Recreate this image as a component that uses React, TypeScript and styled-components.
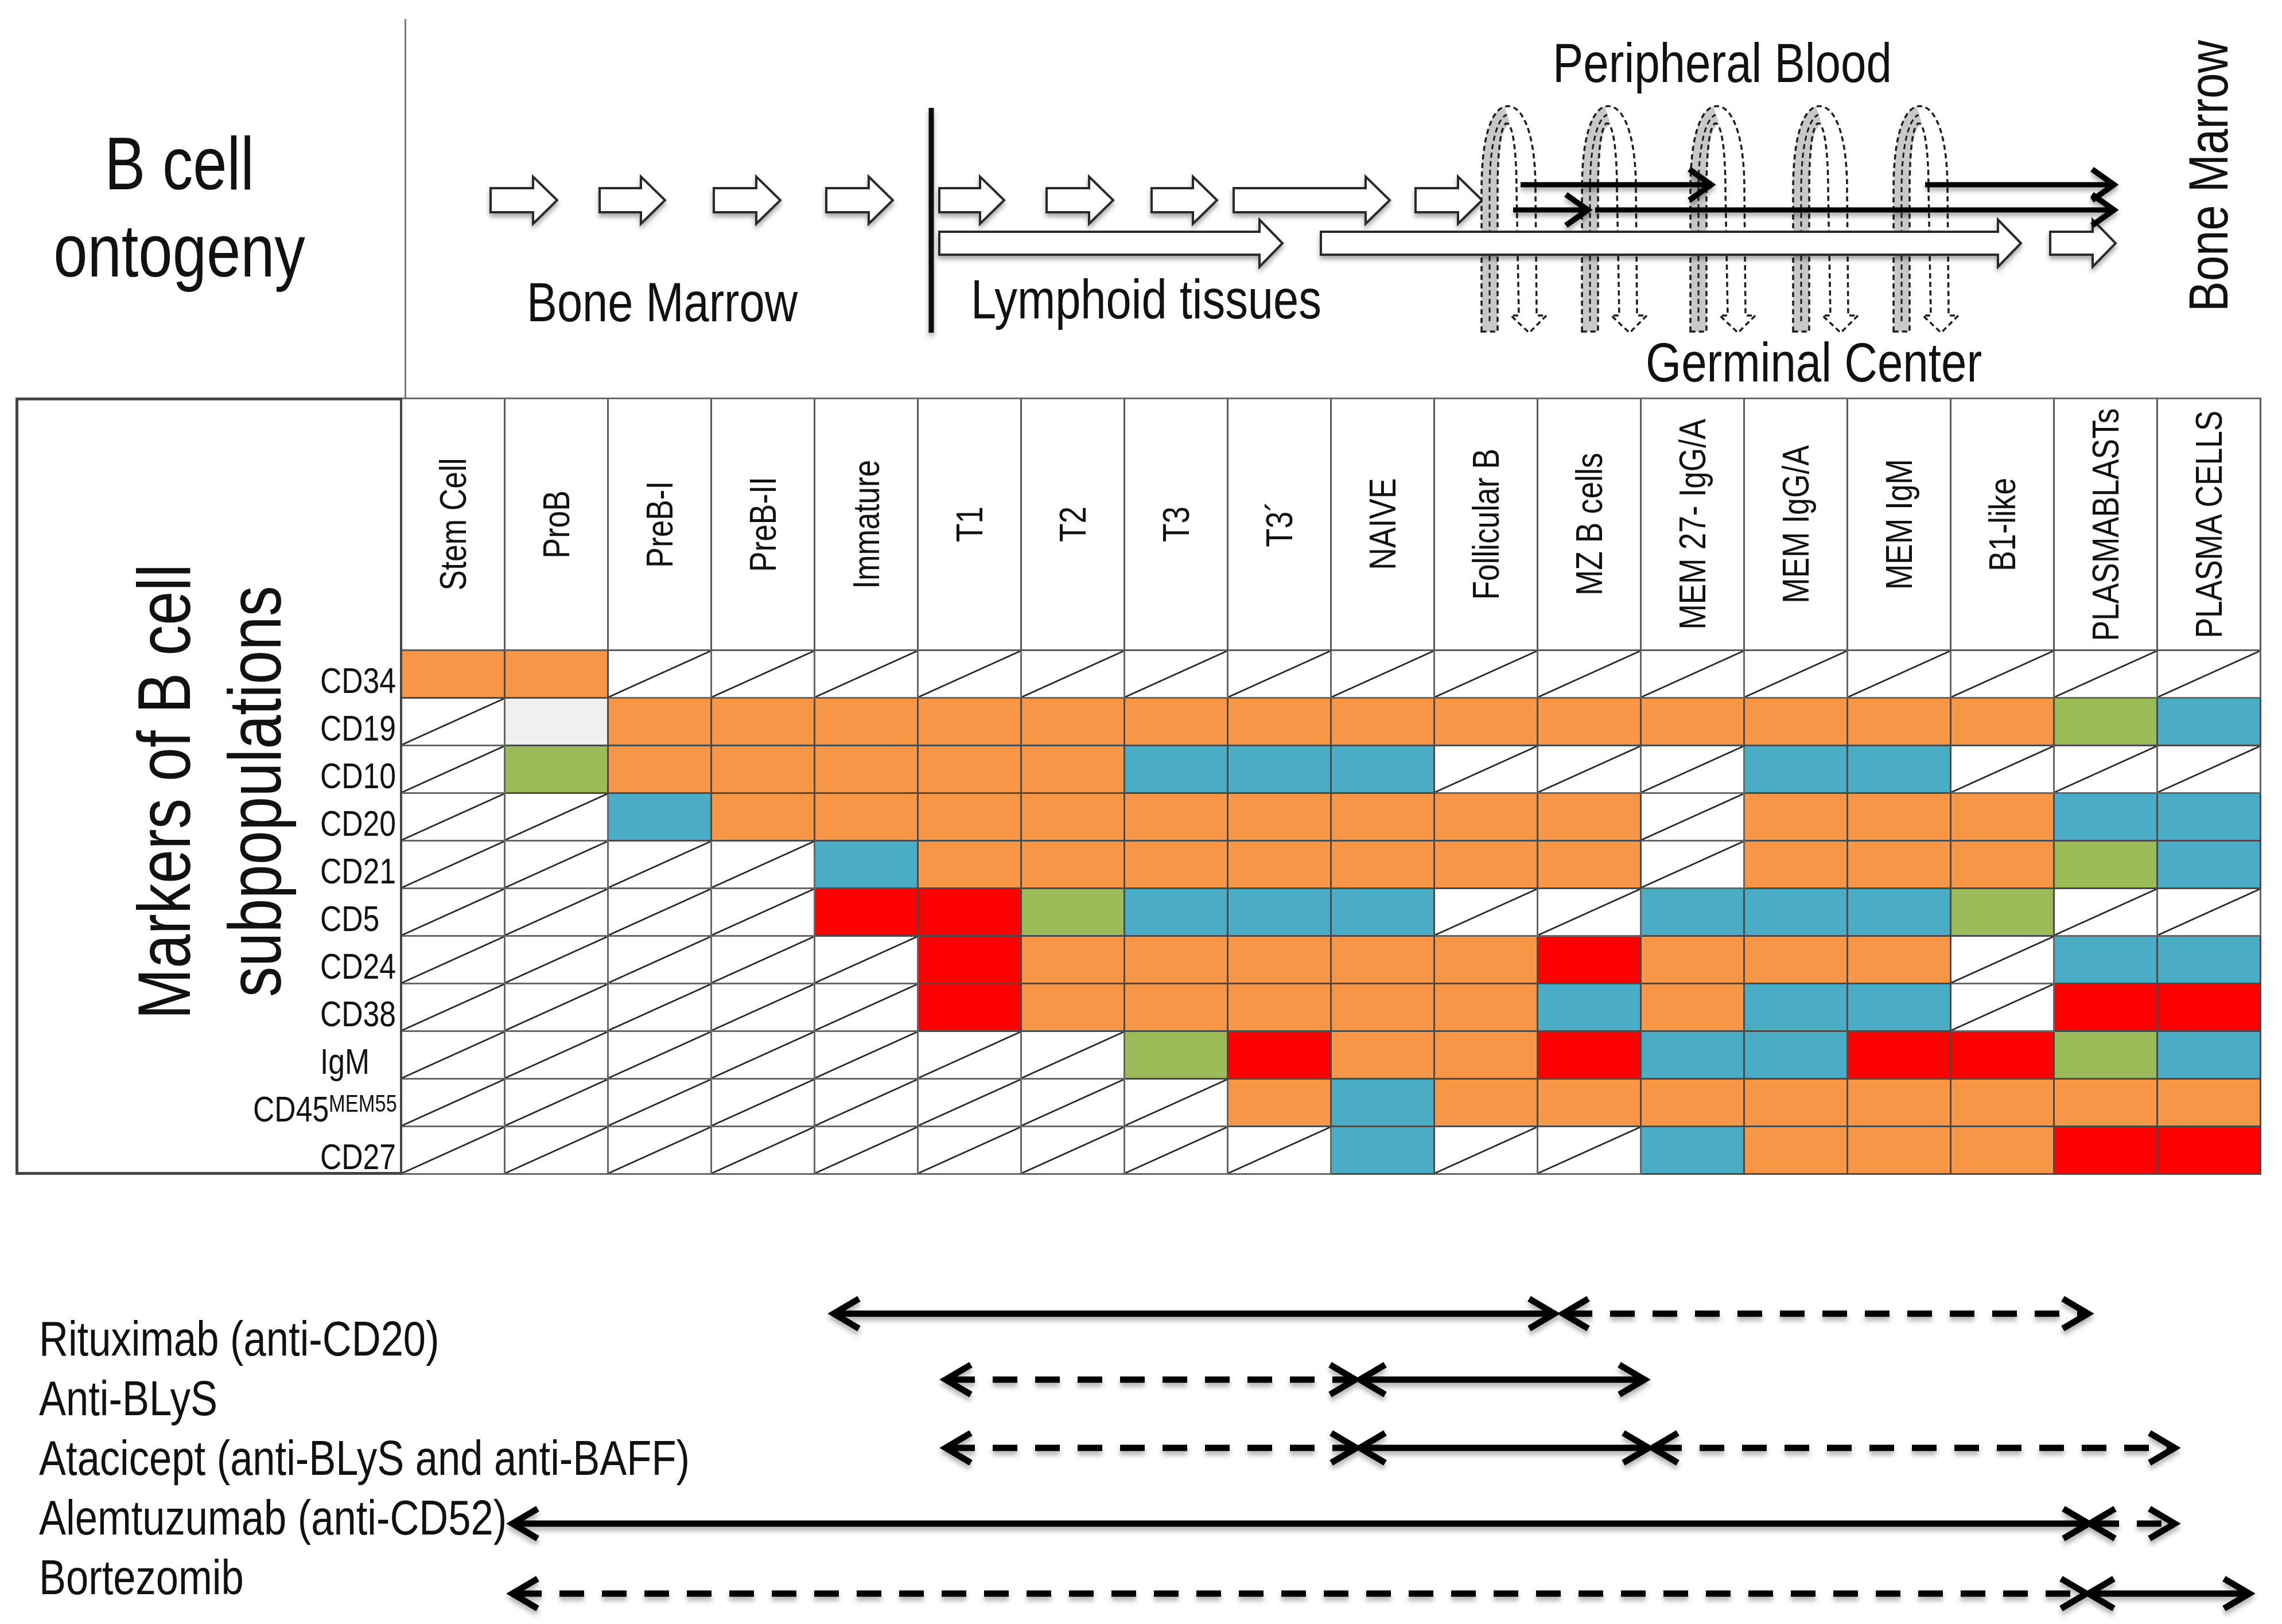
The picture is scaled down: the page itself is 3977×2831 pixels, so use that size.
import React from 'react'
import styled, { createGlobalStyle } from 'styled-components'

const GlobalStyle = createGlobalStyle`
  html, body {
    margin: 0;
    padding: 0;
    background: #fff;
  }
  body {
    font-family: 'Liberation Sans', Arial, Helvetica, sans-serif;
    color: #111;
  }
`

const Page = styled.div`
  width: 3977px;
  height: 2831px;
  display: flex;
  flex-direction: column;
  background: #fff;
  overflow: hidden;
`

/* ---------- top: ontogeny diagram ---------- */

const TopSection = styled.section`
  display: flex;
  height: 693px;
  flex-shrink: 0;
`

const OntogenyTitle = styled.div`
  width: 705px;
  flex-shrink: 0;
  box-sizing: border-box;
  padding: 209px 80px 0 0;
  text-align: center;
  font-size: 130px;
  line-height: 152px;

  span {
    display: block;
    transform: scaleX(0.82);
  }
`

const DiagramPane = styled.div`
  position: relative;
  flex: 1;
  margin-top: 33px;
  border-left: 3px solid #7a7a7a;

  svg {
    display: block;
  }
`

const DiagramLabel = styled.text`
  font-family: 'Liberation Sans', Arial, sans-serif;
  font-size: 97px;
  fill: #111;
`

/* the right-hand "Bone Marrow" reads bottom to top, pinned to the canvas edge */
const SideLabel = styled.div`
  position: absolute;
  right: 80px;
  top: -26px;
  height: 600px;
  writing-mode: vertical-rl;
  transform: rotate(180deg) scaleY(0.82);
  font-size: 97px;
  line-height: 97px;
  text-align: center;
  white-space: nowrap;
`

/* ---------- middle: markers table ---------- */

const MarkerTable = styled.div`
  display: grid;
  grid-template-columns: 674px repeat(18, 180px);
  grid-template-rows: 442px repeat(11, 83px);
  margin-left: 27px;
  flex-shrink: 0;
`

const TitleCell = styled.div`
  grid-column: 1;
  grid-row: 1 / -1;
  box-sizing: border-box;
  border: 5px solid #454545;
  border-right-width: 4px;
  display: flex;
  align-items: center;
  justify-content: center;
  padding-top: 20px;
`

const VerticalTitle = styled.div`
  writing-mode: vertical-rl;
  transform: rotate(180deg) scaleY(0.82);
  font-size: 130px;
  line-height: 158px;
  text-align: center;
  white-space: nowrap;
`

const RowLabel = styled.div<{ $row: number; $right?: boolean }>`
  grid-column: 1;
  grid-row: ${p => p.$row};
  position: relative;
  z-index: 1;
  display: flex;
  align-items: flex-end;
  justify-content: ${p => (p.$right ? 'flex-end' : 'flex-start')};
  padding: ${p => (p.$right ? '0 9px 0 0' : '0 0 0 531px')};
  font-size: 63px;
  line-height: 63px;
  white-space: nowrap;

  span {
    display: inline-block;
    transform: scaleX(0.82);
    transform-origin: ${p => (p.$right ? 'right' : 'left')};
  }
`

const Sup = styled.sup`
  font-size: 42px;
  line-height: 0;
  vertical-align: 17px;
`

const HeaderCell = styled.div`
  box-sizing: border-box;
  border-top: 3px solid #6a6a6a;
  border-right: 3px solid #5a5a5a;
  border-bottom: 3px solid #5a5a5a;
  display: flex;
  align-items: center;
  justify-content: center;
`

const HeaderText = styled.span`
  writing-mode: vertical-rl;
  transform: rotate(180deg) scaleY(0.82);
  font-size: 65px;
  line-height: 1;
  white-space: nowrap;
`

const FILL: Record<string, string> = {
  o: '#f79646',
  b: '#4bacc6',
  g: '#9bbb59',
  r: '#ff0000',
  w: '#f0f0f0',
}

const HATCH =
  'linear-gradient(to bottom right, transparent calc(50% - 1.8px), #2a2a2a calc(50% - 1px), #2a2a2a calc(50% + 1px), transparent calc(50% + 1.8px)), #fff'

const Cell = styled.div<{ $fill: string }>`
  box-sizing: border-box;
  border-right: 3px solid ${p => (p.$fill === 'x' ? '#666' : '#4a4a4a')};
  border-bottom: 3px solid ${p => (p.$fill === 'x' ? '#666' : '#4a4a4a')};
  background: ${p => (p.$fill === 'x' ? HATCH : FILL[p.$fill])};
`

/* ---------- bottom: therapies ---------- */

const TherapySection = styled.section`
  position: relative;
  flex: 1;
  padding: 233px 0 0 68px;
`

const TherapyLabel = styled.div`
  font-size: 86px;
  line-height: 104px;
  white-space: nowrap;
  transform: scaleX(0.82);
  transform-origin: left;
`

const ArrowLayer = styled.svg`
  position: absolute;
  inset: 0;
  pointer-events: none;
`

/* ---------- data ---------- */

const stages = [
  'Stem Cell', 'ProB', 'PreB-I', 'PreB-II', 'Immature', 'T1', 'T2', 'T3', 'T3´', 'NAIVE',
  'Follicular B', 'MZ B cells', 'MEM 27- IgG/A', 'MEM IgG/A', 'MEM IgM', 'B1-like',
  'PLASMABLASTs', 'PLASMA CELLS',
]

const markers: { name: string; sup?: string; cells: string }[] = [
  { name: 'CD34', cells: 'ooxxxxxxxxxxxxxxxx' },
  { name: 'CD19', cells: 'xwoooooooooooooogb' },
  { name: 'CD10', cells: 'xgooooobbbxxxbbxxx' },
  { name: 'CD20', cells: 'xxboooooooooxooobb' },
  { name: 'CD21', cells: 'xxxxboooooooxooogb' },
  { name: 'CD5', cells: 'xxxxrrgbbbxxbbbgxx' },
  { name: 'CD24', cells: 'xxxxxroooooroooxbb' },
  { name: 'CD38', cells: 'xxxxxrooooobobbxrr' },
  { name: 'IgM', cells: 'xxxxxxxgroorbbrrgb' },
  { name: 'CD45', sup: 'MEM55', cells: 'xxxxxxxxoboooooooo' },
  { name: 'CD27', cells: 'xxxxxxxxxbxxbooorr' },
]

const therapies = [
  'Rituximab (anti-CD20)',
  'Anti-BLyS',
  'Atacicept (anti-BLyS and anti-BAFF)',
  'Alemtuzumab (anti-CD52)',
  'Bortezomib',
]

type Seg = { x1: number; x2: number; dashed?: boolean }

const therapyArrows: { y: number; segs: Seg[] }[] = [
  { y: 2290, segs: [{ x1: 1453, x2: 2709 }, { x1: 2724, x2: 3639, dashed: true }] },
  { y: 2405, segs: [{ x1: 1648, x2: 2362, dashed: true }, { x1: 2370, x2: 2866 }] },
  {
    y: 2524,
    segs: [
      { x1: 1648, x2: 2364, dashed: true },
      { x1: 2370, x2: 2873 },
      { x1: 2880, x2: 3790, dashed: true },
    ],
  },
  { y: 2656, segs: [{ x1: 893, x2: 3640 }, { x1: 3642, x2: 3790, dashed: true }] },
  { y: 2778, segs: [{ x1: 893, x2: 3636, dashed: true }, { x1: 3640, x2: 3920 }] },
]

const row1Arrows = [
  [855, 971], [1045, 1159], [1244, 1360], [1440, 1556], [1637, 1750],
  [1824, 1940], [2007, 2121], [2150, 2422], [2467, 2583],
]
const row2Arrows = [[1637, 2235], [3573, 3687]]
const loopCenters = [2628, 2803, 2992, 3171, 3346]
const blackLines = [
  { x1: 2650, x2: 2982, y: 322 },
  { x1: 3355, x2: 3684, y: 322 },
  { x1: 2637, x2: 2767, y: 366 },
  { x1: 2780, x2: 3684, y: 366 },
]

/* ---------- drawing helpers ---------- */

const blockArrow = (x1: number, x2: number, cy: number, shaft = 21, head = 41, len = 42) =>
  `M${x1},${cy - shaft} L${x2 - len},${cy - shaft} L${x2 - len},${cy - head} L${x2},${cy} ` +
  `L${x2 - len},${cy + head} L${x2 - len},${cy + shaft} L${x1},${cy + shaft} Z`

const loopOutline = (c: number) =>
  `M${c - 46},578 L${c - 46},330 C${c - 46},232 ${c - 26},185 ${c},185 ` +
  `C${c + 26},185 ${c + 48},232 ${c + 48},330 L${c + 50},550 L${c + 67},550 L${c + 37},580 ` +
  `L${c + 5},550 L${c + 19},550 L${c + 15},330 C${c + 15},262 ${c + 8},215 ${c - 2},215 ` +
  `C${c - 12},215 ${c - 18},262 ${c - 18},330 L${c - 18},578 Z`

const loopBand = (c: number) =>
  `M${c - 46},578 L${c - 46},330 C${c - 46},240 ${c - 30},192 ${c - 6},186 ` +
  `L${c + 4},216 C${c - 10},220 ${c - 18},262 ${c - 18},330 L${c - 18},578 Z`

const Chevron: React.FC<{ x: number; y: number; dir: 1 | -1; len?: number; half?: number; w?: number }> = ({
  x, y, dir, len = 44, half = 26, w = 11,
}) => (
  <polyline
    points={`${x - dir * len},${y - half} ${x},${y} ${x - dir * len},${y + half}`}
    fill="none"
    stroke="#000"
    strokeWidth={w}
    strokeLinejoin="miter"
  />
)

const OntogenyDiagram = () => (
  <DiagramPane>
    <svg width={3269} height={660} viewBox="708 33 3269 660">
      <defs>
        <filter id="topShadow" filterUnits="userSpaceOnUse" x="0" y="0" width="4200" height="800">
          <feDropShadow dx="0" dy="6" stdDeviation="4" floodColor="#000" floodOpacity="0.35" />
        </filter>
      </defs>

      <g filter="url(#topShadow)">
        <line x1={1623} y1={188} x2={1623} y2={580} stroke="#111" strokeWidth={9} />
        {row1Arrows.map(([a, b]) => (
          <path key={a} d={blockArrow(a, b, 349)} fill="#fff" stroke="#2b2b2b" strokeWidth={4} />
        ))}
        {row2Arrows.map(([a, b]) => (
          <path key={a} d={blockArrow(a, b, 424, 20, 41, 40)} fill="#fff" stroke="#2b2b2b" strokeWidth={4} />
        ))}
      </g>

      {loopCenters.map(c => (
        <g key={c}>
          <path d={loopOutline(c)} fill="#fff" fillOpacity={0.6} stroke="none" />
          <path d={loopBand(c)} fill="#c8c8c8" />
          <path d={loopOutline(c)} fill="none" stroke="#1c1c1c" strokeWidth={3.5} strokeDasharray="9 6" />
          <path
            d={`M${c - 32},560 L${c - 32},330 C${c - 32},250 ${c - 18},205 ${c - 2},200`}
            fill="none"
            stroke="#1c1c1c"
            strokeWidth={3}
            strokeDasharray="9 6"
          />
        </g>
      ))}

      <g filter="url(#topShadow)">
        {blackLines.map(l => (
          <g key={`${l.x1}-${l.y}`}>
            <line x1={l.x1} y1={l.y} x2={l.x2 - 5} y2={l.y} stroke="#000" strokeWidth={9} />
            <Chevron x={l.x2} y={l.y} dir={1} len={38} half={27} w={10} />
          </g>
        ))}
        <path d={blockArrow(2302, 3522, 424, 20, 41, 40)} fill="#fff" stroke="#2b2b2b" strokeWidth={4} />
      </g>

      <DiagramLabel x={918} y={560} textLength={472} lengthAdjust="spacingAndGlyphs">
        Bone Marrow
      </DiagramLabel>
      <DiagramLabel x={1692} y={555} textLength={611} lengthAdjust="spacingAndGlyphs">
        Lymphoid tissues
      </DiagramLabel>
      <DiagramLabel x={2706} y={143} textLength={591} lengthAdjust="spacingAndGlyphs">
        Peripheral Blood
      </DiagramLabel>
      <DiagramLabel x={2868} y={665} textLength={586} lengthAdjust="spacingAndGlyphs">
        Germinal Center
      </DiagramLabel>
    </svg>
    <SideLabel>Bone Marrow</SideLabel>
  </DiagramPane>
)

const TherapyArrows = () => (
  <ArrowLayer width={3977} height={783} viewBox="0 2048 3977 783">
    <defs>
      <filter id="bottomShadow" filterUnits="userSpaceOnUse" x="0" y="2000" width="4200" height="900">
        <feDropShadow dx="0" dy="7" stdDeviation="4" floodColor="#000" floodOpacity="0.3" />
      </filter>
    </defs>
    <g filter="url(#bottomShadow)">
      {therapyArrows.map(row =>
        row.segs.map(s => (
          <g key={`${row.y}-${s.x1}`}>
            <line
              x1={s.x1 + 8}
              y1={row.y}
              x2={s.x2 - 8}
              y2={row.y}
              stroke="#000"
              strokeWidth={11}
              strokeDasharray={s.dashed ? '43 31' : undefined}
            />
            <Chevron x={s.x1} y={row.y} dir={-1} />
            <Chevron x={s.x2} y={row.y} dir={1} />
          </g>
        ))
      )}
    </g>
  </ArrowLayer>
)

const App = () => (
  <Page>
    <GlobalStyle />
    <TopSection>
      <OntogenyTitle>
        <span>B cell</span>
        <span>ontogeny</span>
      </OntogenyTitle>
      <OntogenyDiagram />
    </TopSection>

    <MarkerTable>
      <TitleCell>
        <VerticalTitle>
          Markers of B cell
          <br />
          subpopulations
        </VerticalTitle>
      </TitleCell>
      {markers.map((m, i) => (
        <RowLabel key={m.name} $row={i + 2} $right={!!m.sup}>
          <span>
            {m.name}
            {m.sup && <Sup>{m.sup}</Sup>}
          </span>
        </RowLabel>
      ))}
      {stages.map(s => (
        <HeaderCell key={s}>
          <HeaderText>{s}</HeaderText>
        </HeaderCell>
      ))}
      {markers.map(m =>
        m.cells.split('').map((c, j) => <Cell key={`${m.name}-${j}`} $fill={c} />)
      )}
    </MarkerTable>

    <TherapySection>
      {therapies.map(t => (
        <TherapyLabel key={t}>{t}</TherapyLabel>
      ))}
      <TherapyArrows />
    </TherapySection>
  </Page>
)

export default App
